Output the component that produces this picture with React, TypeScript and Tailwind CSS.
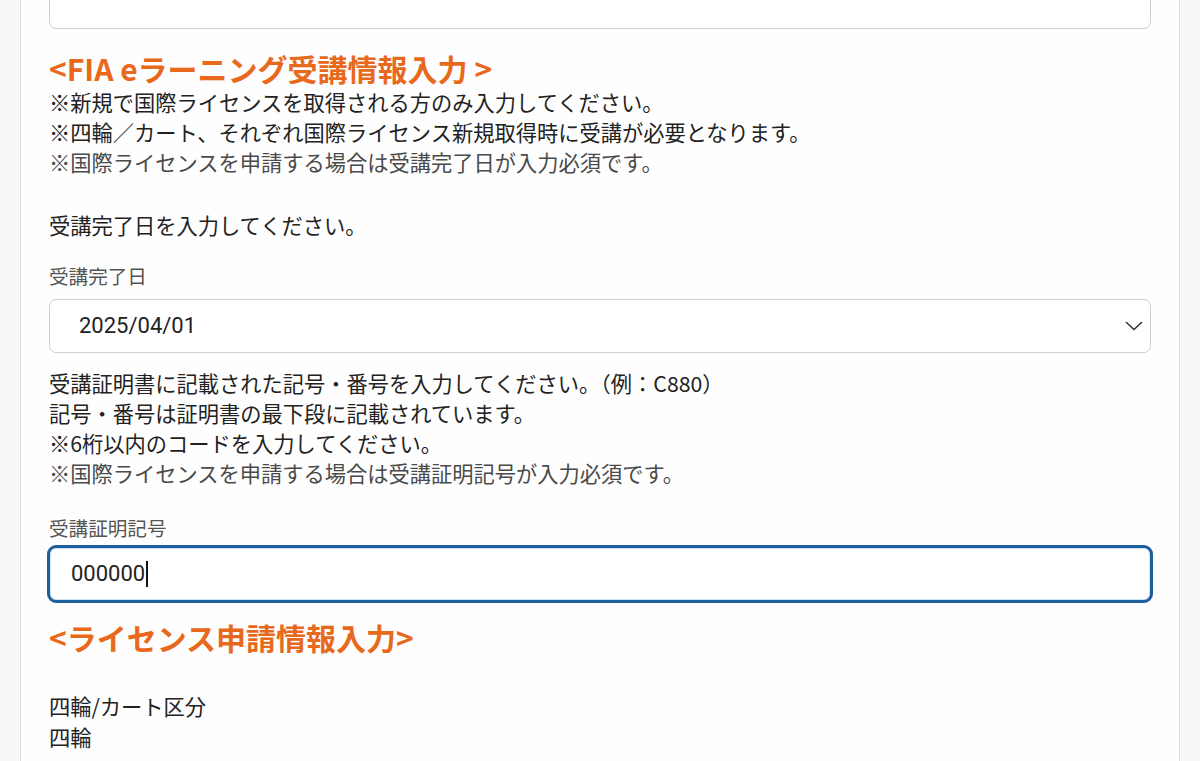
const jp = "font-['Noto_Sans_CJK_JP','Noto_Sans',sans-serif]";
const roboto = "font-['Roboto','Noto_Sans',sans-serif]";

function Heading({ children }: { children: React.ReactNode }) {
  return (
    <h2 className="text-[30px] font-bold leading-[38px] text-[#e8691c]">
      {children}
    </h2>
  );
}

export default function App() {
  return (
    <div className={`flex h-[761px] w-full overflow-hidden bg-[#f6f7f9] ${jp}`}>
      <div className="w-[21px] shrink-0 border-r border-[#dcdde0]" />

      <main className="flex-1 overflow-hidden bg-[#fefefe] px-[28px] text-[21.25px] leading-[30px] text-[#222]">
        {/* previous field, scrolled off the top */}
        <div className="-mt-[29px] h-[58px] rounded-[7px] border border-[#cfcfcf] bg-white" />

        <div className="mt-[20px]">
          <Heading>&lt;FIA eラーニング受講情報入力 &gt;</Heading>
        </div>
        <p>※新規で国際ライセンスを取得される方のみ入力してください。</p>
        <p>※四輪／カート、それぞれ国際ライセンス新規取得時に受講が必要となります。</p>
        <p className="text-[#4a4a4a]">※国際ライセンスを申請する場合は受講完了日が入力必須です。</p>

        <p className="mt-[33px]">受講完了日を入力してください。</p>

        <label className="mt-[22px] block text-[19.6px] leading-[28px] text-[#555]">受講完了日</label>
        <div className="mt-[9px] flex h-[54px] items-center justify-between rounded-[7px] border border-[#cfcfcf] bg-white pl-[29px] pr-[6px]">
          <span className={`${roboto} text-[22px] text-[#222]`}>2025/04/01</span>
          <svg width="18" height="10" viewBox="0 0 18 10" fill="none" className="mr-[1px]">
            <path d="M1.5 1.5 L9 8.5 L16.5 1.5" stroke="#333" strokeWidth="1.6" strokeLinecap="round" strokeLinejoin="round" />
          </svg>
        </div>

        <div className="mt-[15px]">
          <p>受講証明書に記載された記号・番号を入力してください。（例：C880）</p>
          <p>記号・番号は証明書の最下段に記載されています。</p>
          <p>※6桁以内のコードを入力してください。</p>
          <p className="text-[#4a4a4a]">※国際ライセンスを申請する場合は受講証明記号が入力必須です。</p>
        </div>

        <label className="mt-[26px] block text-[19.6px] leading-[28px] text-[#555]">受講証明記号</label>
        <div className="-mx-[2px] mt-[3px] flex h-[58px] items-center rounded-[9px] border-[3px] border-[#1f5e9c] bg-white pl-[21px] shadow-[inset_0_0_0_1px_#cfe3f7]">
          <span className={`${roboto} text-[22px] text-[#222]`}>000000</span>
          <span className="ml-[1px] h-[26px] w-[1.5px] bg-[#111]" />
        </div>

        <div className="mt-[15px]">
          <Heading>&lt;ライセンス申請情報入力&gt;</Heading>
        </div>

        <p className="mt-[35px]">四輪/カート区分</p>
        <p className="leading-[31px]">四輪</p>
      </main>

      <div className="w-[21px] shrink-0 border-l border-[#dcdde0]" />
    </div>
  );
}
